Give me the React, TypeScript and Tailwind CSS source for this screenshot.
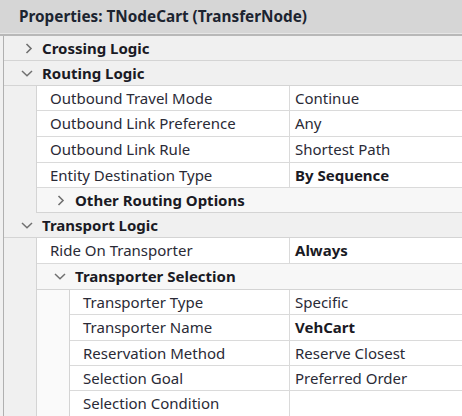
import React from "react";

type Prop = { name: string; value: string; bold?: boolean; h: string };

const Right = () => (
  <svg width="8" height="11" viewBox="0 0 8 11" className="shrink-0">
    <path d="M1.5 1 L6 5.5 L1.5 10" fill="none" stroke="#707070" strokeWidth="1.6" />
  </svg>
);

const Down = () => (
  <svg width="12" height="7" viewBox="0 0 12 7" className="shrink-0">
    <path d="M1 1 L6 5.8 L11 1" fill="none" stroke="#707070" strokeWidth="1.5" />
  </svg>
);

function PropRow({ p, indent }: { p: Prop; indent: "l1" | "l2" }) {
  return (
    <div className={`flex ${p.h} border-b border-[#dadada] bg-white`}>
      <div
        className={
          indent === "l1"
            ? "flex w-[253px] shrink-0 items-center border-r border-[#dadada] pl-[13px]"
            : "flex w-[220px] shrink-0 items-center border-r border-[#dadada] pl-[13px]"
        }
      >
        {p.name}
      </div>
      <div className={`flex items-center pl-[5px] ${p.bold ? "font-bold text-[#1a1a24]" : ""}`}>{p.value}</div>
    </div>
  );
}

export default function App() {
  return (
    <div
      className="h-[416px] w-[462px] overflow-hidden bg-[#f0f0f0] text-[15px] text-[#2a2a36]"
      style={{ fontFamily: '"Noto Sans", "Open Sans", sans-serif' }}
    >
      <div className="flex h-[33px] items-center bg-[#d6d6d6] pl-[19px] text-[15.3px] font-bold text-[#1c2430]">
        Properties: TNodeCart (TransferNode)
      </div>
      <div className="h-[1px] bg-[#e6e6e6]" />
      <div className="h-[2px] bg-[#b8b8b8]" />
      <div className="ml-[3px] flex flex-col border-l border-[#b0b0b0]">
        {/* Crossing Logic */}
        <div className="flex h-[25px] items-center gap-[9px] border-b border-[#d4d4d4] pl-[21px] font-bold text-[#1a1a24]">
          <Right />
          <span>Crossing Logic</span>
        </div>

        {/* Routing Logic */}
        <div className="flex h-[25px] items-center gap-[9px] border-b border-[#d4d4d4] pl-[17px] font-bold text-[#1a1a24]">
          <Down />
          <span>Routing Logic</span>
        </div>
        <div className="ml-[32px] flex flex-col border-l border-[#d4d4d4]">
          <PropRow indent="l1" p={{ name: "Outbound Travel Mode", value: "Continue", h: "h-[25px]" }} />
          <PropRow indent="l1" p={{ name: "Outbound Link Preference", value: "Any", h: "h-[26px]" }} />
          <PropRow indent="l1" p={{ name: "Outbound Link Rule", value: "Shortest Path", h: "h-[26px]" }} />
          <PropRow indent="l1" p={{ name: "Entity Destination Type", value: "By Sequence", bold: true, h: "h-[25px]" }} />
          <div className="flex h-[25px] items-center gap-[10px] border-b border-[#d4d4d4] bg-[#f7f7f7] pl-[20px] font-bold text-[#1a1a24]">
            <Right />
            <span>Other Routing Options</span>
          </div>
        </div>

        {/* Transport Logic */}
        <div className="flex h-[25px] items-center gap-[9px] border-b border-[#d4d4d4] pl-[17px] font-bold text-[#1a1a24]">
          <Down />
          <span>Transport Logic</span>
        </div>
        <div className="ml-[32px] flex flex-col border-l border-[#d4d4d4]">
          <PropRow indent="l1" p={{ name: "Ride On Transporter", value: "Always", bold: true, h: "h-[26px]" }} />
          <div className="flex h-[26px] items-center gap-[9px] border-b border-[#d4d4d4] bg-[#f7f7f7] pl-[17px] font-bold text-[#1a1a24]">
            <Down />
            <span>Transporter Selection</span>
          </div>
          <div className="flex flex-col bg-[#fafafa] pl-[32px]">
            <div className="flex flex-col border-l border-[#d4d4d4]">
              <PropRow indent="l2" p={{ name: "Transporter Type", value: "Specific", h: "h-[25px]" }} />
              <PropRow indent="l2" p={{ name: "Transporter Name", value: "VehCart", bold: true, h: "h-[26px]" }} />
              <PropRow indent="l2" p={{ name: "Reservation Method", value: "Reserve Closest", h: "h-[25px]" }} />
              <PropRow indent="l2" p={{ name: "Selection Goal", value: "Preferred Order", h: "h-[25px]" }} />
              <PropRow indent="l2" p={{ name: "Selection Condition", value: "", h: "h-[26px]" }} />
            </div>
          </div>
        </div>
      </div>
    </div>
  );
}
